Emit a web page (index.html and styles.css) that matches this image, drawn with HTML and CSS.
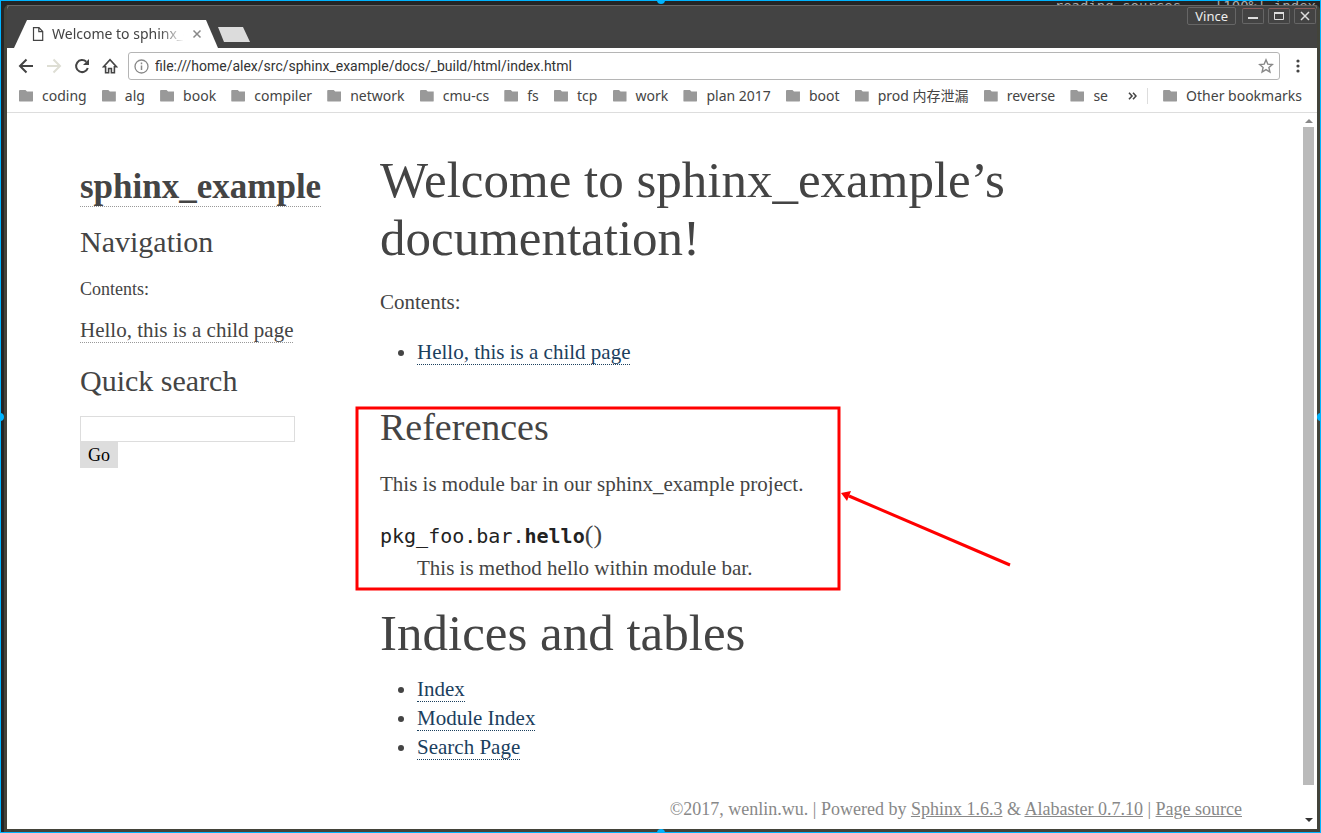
FILE: index.html
```html
<!DOCTYPE html>
<html lang="en">
<head>
<meta charset="utf-8">
<title>Welcome to sphinx_example’s documentation!</title>
<link rel="stylesheet" href="styles.css">
</head>
<body>
<div class="desktop">
  <div class="terminal" aria-hidden="true"><span>reading sources... [100%] index</span></div>
  <div class="window">
    <header class="titlebar">
      <div class="tab">
        <svg class="tab-icon" width="12" height="14" viewBox="0 0 12 14" fill="none" stroke="#444" stroke-width="1.2"><path d="M1.5.7h5.500l3.700 3.800v8.800H1.500zM6.800.7v4h4"/></svg>
        <span class="tab-title">Welcome to sphinx_example’s</span>
        <button class="plain" aria-label="Close tab"><svg width="10" height="10" viewBox="0 0 10 10" stroke="#888" stroke-width="1.500"><path d="M1.500 1.500l7 7M8.500 1.500l-7 7"/></svg></button>
      </div>
      <button class="new-tab" aria-label="New tab"></button>
      <div class="window-buttons">
        <button class="user">Vince</button>
        <button class="frame-button" aria-label="Minimize"><svg width="20" height="14" viewBox="0 0 20 14"><path d="M5 9h10" stroke="#ddd" stroke-width="2"/></svg></button>
        <button class="frame-button" aria-label="Maximize"><svg width="20" height="14" viewBox="0 0 20 14" fill="none" stroke="#ddd"><path d="M5.500 4v6.500h9V4z" /><path d="M5 4h10" stroke-width="2"/></svg></button>
        <button class="frame-button" aria-label="Close"><svg width="20" height="14" viewBox="0 0 20 14"><path d="M6 3l8 8M14 3l-8 8" stroke="#ddd" stroke-width="1.500"/></svg></button>
      </div>
    </header>
    <div class="toolbar">
      <button class="plain" aria-label="Back"><svg width="16" height="16" viewBox="0 0 16 16" fill="none" stroke="#444" stroke-width="2"><path d="M15 8H2M8.500 1.500L2 8l6.500 6.500"/></svg></button>
      <button class="plain" aria-label="Forward"><svg width="16" height="16" viewBox="0 0 16 16" fill="none" stroke="#deded4" stroke-width="2"><path d="M1 8h13M7.500 1.500L14 8l-6.500 6.500"/></svg></button>
      <button class="plain" aria-label="Reload"><svg width="16" height="16" viewBox="0 0 16 16" fill="none" stroke="#444" stroke-width="2"><path d="M13.800 10a6 6 0 1 1-1.500-6.200"/><path d="M15 1v6H9z" fill="#444" stroke="none"/></svg></button>
      <button class="plain" aria-label="Home"><svg width="16" height="16" viewBox="0 0 16 16" fill="none" stroke="#444" stroke-width="1.600"><path d="M1.600 8.700h2v6.100h3v-4.300h2.800v4.300h3V8.700h2L8 1.600z"/></svg></button>
      <div class="address">
        <svg width="15" height="15" viewBox="0 0 15 15" fill="none" stroke="#888"><circle cx="7.500" cy="7.500" r="6.500" stroke-width="1.300"/><path d="M7.500 6.500v4.500M7.500 3.600v1.600" stroke-width="1.500"/></svg>
        <input type="text" aria-label="Address" value="file:///home/alex/src/sphinx_example/docs/_build/html/index.html">
        <button class="plain" aria-label="Bookmark this page"><svg width="16" height="16" viewBox="0 0 16 16" fill="none" stroke="#888" stroke-width="1.400"><path d="M8 1.800l1.800 4.300 4.500.4-3.400 3 1 4.500L8 11.600 4.100 14l1-4.500-3.400-3 4.500-.4z"/></svg></button>
      </div>
      <button class="plain menu" aria-label="Menu"><svg width="4" height="14" viewBox="0 0 4 14" fill="#444"><circle cx="2" cy="2" r="1.600"/><circle cx="2" cy="7" r="1.600"/><circle cx="2" cy="12" r="1.600"/></svg></button>
    </div>
    <nav class="bookmarks" aria-label="Bookmarks">
      <div class="folders">
        <button class="folder">coding</button>
        <button class="folder">alg</button>
        <button class="folder">book</button>
        <button class="folder">compiler</button>
        <button class="folder">network</button>
        <button class="folder">cmu-cs</button>
        <button class="folder">fs</button>
        <button class="folder">tcp</button>
        <button class="folder">work</button>
        <button class="folder">plan 2017</button>
        <button class="folder">boot</button>
        <button class="folder">prod 内存泄漏</button>
        <button class="folder">reverse</button>
        <button class="folder">se</button>
      </div>
      <button class="plain more" aria-label="More bookmarks"><svg width="9" height="8" viewBox="0 0 9 8" fill="none" stroke="#444" stroke-width="1.600"><path d="M1 .8L4 4 1 7.200M5 .8L8 4 5 7.200"/></svg></button>
      <button class="folder other">Other bookmarks</button>
    </nav>
    <div class="viewport">
      <div class="page">
        <div class="document">
          <aside class="sidebar">
            <h1 class="logo"><a href="#">sphinx_example</a></h1>
            <h3>Navigation</h3>
            <p class="caption">Contents:</p>
            <p class="nav-link"><a href="#">Hello, this is a child page</a></p>
            <h3 id="search-label">Quick search</h3>
            <form class="search">
              <input type="text" aria-labelledby="search-label">
              <button type="button">Go</button>
            </form>
          </aside>
          <main class="body">
            <h1>Welcome to sphinx_example’s documentation!</h1>
            <p class="intro">Contents:</p>
            <ul><li><a href="#">Hello, this is a child page</a></li></ul>
            <section class="references">
              <h2>References</h2>
              <p>This is module bar in our sphinx_example project.</p>
              <dl>
                <dt><code>pkg_foo.bar.</code><code class="name">hello</code><span class="paren">()</span></dt>
                <dd>This is method hello within module bar.</dd>
              </dl>
              <svg class="annotation" width="660" height="188" viewBox="0 0 660 188" fill="none" stroke="#f00" stroke-width="3"><path d="M2 4h482v181H2z"/><path d="M494 92l161 69"/><path d="M486 89l10-2-4 10z" fill="#f00" stroke="none"/></svg>
            </section>
            <h1>Indices and tables</h1>
            <ul class="indices">
              <li><a href="#">Index</a></li>
              <li><a href="#">Module Index</a></li>
              <li><a href="#">Search Page</a></li>
            </ul>
          </main>
        </div>
        <footer>©2017, wenlin.wu. | Powered by <a href="#">Sphinx 1.6.3</a> &amp; <a href="#">Alabaster 0.7.10</a> | <a href="#">Page source</a></footer>
      </div>
      <div class="scrollbar" aria-hidden="true">
        <svg width="8" height="4" viewBox="0 0 8 4" fill="#888"><path d="M0 4l4-4 4 4z"/></svg>
        <div class="thumb"></div>
        <svg width="8" height="4" viewBox="0 0 8 4" fill="#333"><path d="M0 0l4 4 4-4z"/></svg>
      </div>
    </div>
  </div>
  <i class="handle top"></i><i class="handle bottom"></i><i class="handle left"></i><i class="handle right"></i>
</div>
</body>
</html>
```
FILE: styles.css
```css
* { box-sizing: border-box; }
body, h1, h2, h3, p, ul, dl, dd { margin: 0; }
body { background: #00b4ff; }
button, input { font: inherit; color: inherit; }
svg { display: block; flex: none; }

.desktop {
  position: relative;
  display: flex;
  flex-direction: column;
  height: 100vh;
  overflow: hidden;
  border: 1px solid #00b4ff;
  background: #232526;
}
.terminal {
  height: 4px;
  flex: none;
  overflow: hidden;
  padding-right: 4px;
  text-align: right;
  font: 14px/10px "DejaVu Sans Mono", monospace;
  white-space: pre;
  color: #aaa;
}
.window {
  flex: 1;
  min-height: 0;
  display: flex;
  flex-direction: column;
  margin-left: 3px;
  border: solid #43433a;
  border-width: 1px 3px 3px;
  border-top-color: #666;
  border-radius: 5px 5px 0 0;
  background: #fff;
  overflow: hidden;
  font: 14px/20px "Noto Sans", "Noto Sans CJK SC", sans-serif;
  color: #444;
}
.plain { padding: 0; border: 0; background: none; }

.titlebar {
  display: flex;
  align-items: flex-end;
  flex: none;
  height: 42px;
  padding-left: 7px;
  background: #434343;
}
.tab {
  display: flex;
  align-items: center;
  width: 204px;
  height: 28px;
  padding: 0 14px 0 18px;
  background: #fff;
  clip-path: polygon(0 100%, 13px 0, 192px 0, 100% 100%);
}
.tab-title {
  width: 132px;
  margin: 0 8px 0 8px;
  overflow: hidden;
  white-space: nowrap;
  -webkit-mask-image: linear-gradient(to right, #000 108px, transparent);
  mask-image: linear-gradient(to right, #000 108px, transparent);
}
.new-tab {
  width: 32px;
  height: 15px;
  margin-bottom: 6px;
  padding: 0;
  border: 0;
  background: #dcdcdc;
  clip-path: polygon(0 0, 25px 0, 100% 100%, 6px 100%);
}
.window-buttons {
  display: flex;
  align-items: center;
  align-self: flex-start;
  gap: 4px;
  margin-left: auto;
  padding: 1px 1px 0 0;
}
.user, .frame-button {
  border: 1px solid #666;
  border-radius: 2px;
  background: none;
  color: #eee;
}
.user { padding: 0 7px; margin-right: 2px; font-size: 13px; line-height: 16px; }
.frame-button { padding: 0; border-top-color: #8a5c5c; }

.toolbar { display: flex; align-items: center; flex: none; gap: 12px; padding: 4px 13px 4px 11px; }
.address {
  flex: 1;
  display: flex;
  align-items: center;
  gap: 6px;
  min-width: 0;
  height: 28px;
  margin-left: -2px;
  padding: 0 5px;
  border: 1px solid #b5b5b5;
  border-radius: 3px;
}
.address input { flex: 1; min-width: 0; padding: 0; border: 0; background: none; font: 14px/20px Roboto, sans-serif; color: #333; }
.menu { padding: 0 4px; }

.bookmarks {
  display: flex;
  align-items: center;
  flex: none;
  height: 29px;
  padding: 0 15px 5px 12px;
  border-bottom: 1px solid #ddd;
}
.folders { flex: 1; display: flex; justify-content: space-between; min-width: 0; }
.folder { display: flex; align-items: center; gap: 9px; padding: 0; border: 0; background: none; white-space: nowrap; }
.folder::before {
  content: "";
  width: 14px;
  height: 12px;
  background: #999;
  border-radius: 1px;
  clip-path: polygon(0 0, 6px 0, 8px 2px, 100% 2px, 100% 100%, 0 100%);
}
.more { margin: 0 26px 0 20px; }
.other { position: relative; }
.other::after { content: ""; position: absolute; left: -16px; top: 2px; width: 1px; height: 16px; background: #ddd; }

.viewport { flex: 1; min-height: 0; display: flex; }
.page {
  flex: 1;
  overflow: hidden;
  padding: 38px 61px 0 73px;
  font-family: "Liberation Serif", serif;
  font-size: 21px;
  line-height: 29px;
}
.document { display: grid; grid-template-columns: 215px 1fr; column-gap: 85px; max-width: 1162px; margin: 0 auto; }
.sidebar { padding-top: 15px; }
.sidebar a { color: #444; text-decoration: none; border-bottom: 1px dotted #999; }
.logo { font-size: 35px; line-height: 42px; }
.sidebar h3 { margin: 16px 0 17px; font-size: 30px; font-weight: 400; line-height: 36px; }
.caption { margin-bottom: 15px; font-size: 18px; line-height: 24px; }
.sidebar .nav-link { margin-bottom: 18px; }
.search { font-size: 18px; line-height: 24px; }
.search input { display: block; width: 100%; height: 26px; border: 1px solid #ddd; background: #fff; }
.search button { padding: 0 8px; height: 26px; border: 0; background: #ddd; color: #000; }

.body h1 { max-width: 700px; font-size: 51px; font-weight: 400; line-height: 58px; }
.body h2 { font-size: 38px; font-weight: 400; line-height: 44px; }
.body a { color: #1b405e; text-decoration: none; border-bottom: 1px dotted #1b405e; }
.intro { margin: 21px 0; }
.body ul { padding-left: 37px; }
.references { position: relative; margin: 38px 0 21px; }
.references p { margin: 21px 0; }
dt { display: flex; align-items: baseline; }
code { font: 20px/29px "DejaVu Sans Mono", monospace; color: #222; }
.name { font-weight: 700; }
.paren { font-size: 26px; }
dd { margin: 3px 0 0 37px; }
.annotation { position: absolute; left: -25px; top: -1px; }
.indices { margin-top: 13px; }
footer { max-width: 1162px; margin: 35px auto 0; text-align: right; font-size: 18px; line-height: 25px; color: #888; }
footer a { color: #888; }

.scrollbar { display: flex; flex-direction: column; align-items: center; gap: 4px; flex: none; width: 11px; margin-right: 3px; padding: 6px 0 7px; }
.thumb { width: 11px; flex: 1; margin-bottom: 29px; background: #bababa; }

.handle { position: absolute; width: 8px; height: 8px; border-radius: 50%; background: #00b4ff; }
.handle.top { left: 50%; top: -5px; margin-left: -4px; }
.handle.bottom { left: 50%; bottom: -5px; margin-left: -4px; }
.handle.left { left: -5px; top: 50%; margin-top: -4px; }
.handle.right { right: -5px; top: 50%; margin-top: -4px; }
```
